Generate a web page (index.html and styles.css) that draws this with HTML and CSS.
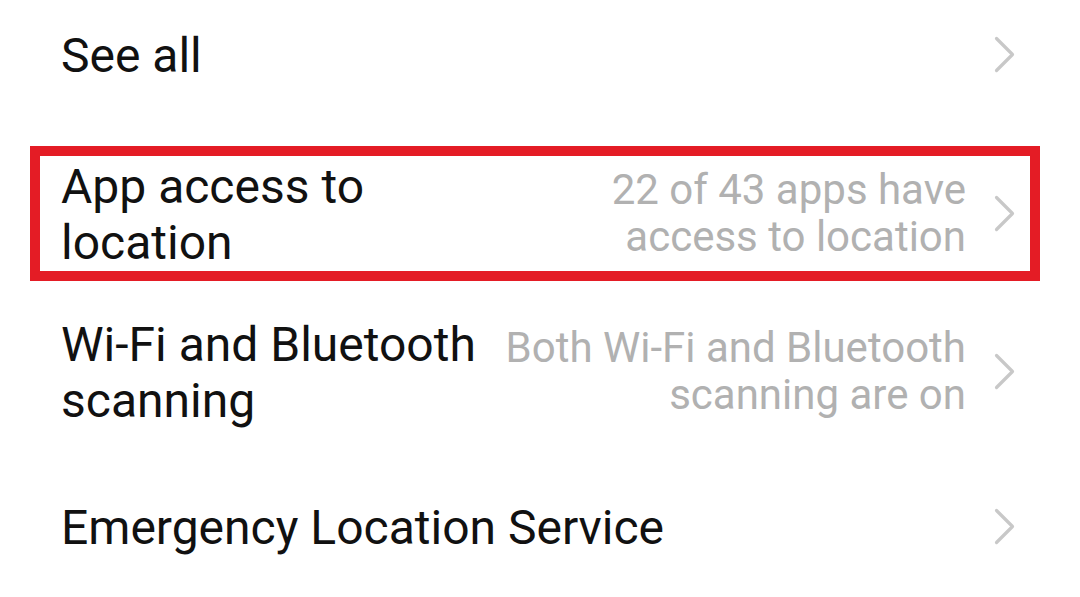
FILE: index.html
```html
<!DOCTYPE html>
<html lang="en">
<head>
<meta charset="utf-8">
<title>Location settings</title>
<link rel="stylesheet" href="styles.css">
</head>
<body>
<div class="list">
  <div class="row row-first">
    <div class="title title-full">See all</div>
    <svg class="chev" viewBox="0 0 21 37" width="21" height="37"><polyline points="2.5,2.5 18.5,18.5 2.5,34.5"/></svg>
  </div>
  <div class="highlight">
    <div class="row row-inner">
      <div class="title">App access to location</div>
      <div class="value">22 of 43 apps have access to location</div>
      <svg class="chev" viewBox="0 0 21 37" width="21" height="37"><polyline points="2.5,2.5 18.5,18.5 2.5,34.5"/></svg>
    </div>
  </div>
  <div class="row row-third">
    <div class="title">Wi-Fi and Bluetooth scanning</div>
    <div class="value">Both Wi-Fi and Bluetooth scanning are on</div>
    <svg class="chev" viewBox="0 0 21 37" width="21" height="37"><polyline points="2.5,2.5 18.5,18.5 2.5,34.5"/></svg>
  </div>
  <div class="row row-fourth">
    <div class="title title-full">Emergency Location Service</div>
    <svg class="chev" viewBox="0 0 21 37" width="21" height="37"><polyline points="2.5,2.5 18.5,18.5 2.5,34.5"/></svg>
  </div>
</div>
</body>
</html>
```
FILE: styles.css
```css
html, body {
  margin: 0;
  padding: 0;
  background: #ffffff;
}
body {
  font-family: Roboto, "Noto Sans", Arial, sans-serif;
  width: 1080px;
  height: 597px;
  overflow: hidden;
}
.list {
  display: flex;
  flex-direction: column;
}
.row {
  display: flex;
  align-items: center;
  padding: 0 65px 0 61px;
}
.row-first {
  padding-top: 28px;
}
.highlight {
  margin: 62px 40px 0 30px;
  border: 10px solid #e41c25;
  padding: 3px 0 0 0;
}
.row-inner {
  padding: 0 15px 0 21px;
}
.row-third {
  margin-top: 36px;
}
.row-fourth {
  margin-top: 71px;
}
.title {
  flex: 0 0 418px;
  font-size: 48px;
  line-height: 56px;
  color: #111111;
}
.title-full {
  flex: 1 1 auto;
}
.value {
  flex: 1 1 auto;
  margin-left: 6px;
  font-size: 42px;
  line-height: 47px;
  color: #b1b1b1;
  text-align: right;
  padding-bottom: 4px;
}
.chev {
  flex: 0 0 21px;
  margin-left: 28px;
  margin-bottom: 4px;
}
.title-full + .chev {
  margin-left: 20px;
}
.chev polyline {
  fill: none;
  stroke: #c8c8c8;
  stroke-width: 3.2;
  stroke-linecap: round;
  stroke-linejoin: round;
}
```
